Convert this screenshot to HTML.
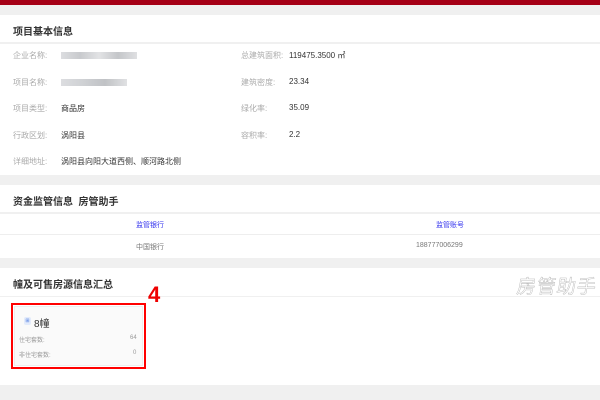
<!DOCTYPE html>
<html><head><meta charset="utf-8"><style>
*{margin:0;padding:0;box-sizing:border-box}
body{width:600px;height:400px;background:#f0f0f0;font-family:"Liberation Sans","Noto Sans CJK SC",sans-serif;position:relative;overflow:hidden;font-size:8px;color:#333}
.a{position:absolute}
.card{position:absolute;left:0;width:600px;background:#fff}
.t{position:absolute;left:13px;font-size:10px;font-weight:bold;color:#333}
.hr{position:absolute;left:0;width:600px;height:2px;background:#f0f0f0}
.lb{color:#aaa}
.bl{background:#d4d6da;height:7px}
</style></head><body>
<div class="a" style="left:0;top:0;width:600px;height:5px;background:#a50016"></div>
<div class="card" style="top:15px;height:160px">
<div class="t" style="top:8px">项目基本信息</div>
<div class="hr" style="top:27px"></div>
<div class="a lb" style="left:13px;top:35px">企业名称:</div>
<div class="a bl" style="left:61px;top:37px;width:76px;background:linear-gradient(90deg,#dcdde0,#c8cacd,#e2e3e5,#c4c6c9,#dfe0e2)"></div>
<div class="a lb" style="left:13px;top:62px">项目名称:</div>
<div class="a bl" style="left:61px;top:64px;width:66px;background:linear-gradient(90deg,#dcdde0,#cfd1d4,#c0c2c5,#e0e1e3)"></div>
<div class="a lb" style="left:13px;top:88px">项目类型:</div><div class="a" style="left:61px;top:88px">商品房</div>
<div class="a lb" style="left:13px;top:115px">行政区划:</div><div class="a" style="left:61px;top:115px">涡阳县</div>
<div class="a lb" style="left:13px;top:141px">详细地址:</div><div class="a" style="left:61px;top:141px">涡阳县向阳大道西侧、顺河路北侧</div>
<div class="a lb" style="left:241px;top:35px">总建筑面积:</div><div class="a" style="left:289px;top:35px">119475.3500 ㎡</div>
<div class="a lb" style="left:241px;top:62px">建筑密度:</div><div class="a" style="left:289px;top:62px">23.34</div>
<div class="a lb" style="left:241px;top:88px">绿化率:</div><div class="a" style="left:289px;top:88px">35.09</div>
<div class="a lb" style="left:241px;top:115px">容积率:</div><div class="a" style="left:289px;top:115px">2.2</div>
</div>
<div class="card" style="top:185px;height:73px">
<div class="t" style="top:8px">资金监管信息&nbsp; 房管助手</div>
<div class="hr" style="top:27px"></div>
<div class="a" style="left:136px;top:35px;color:#3333ee;font-size:7px">监管银行</div>
<div class="a" style="left:436px;top:35px;color:#3333ee;font-size:7px">监管账号</div>
<div class="a" style="left:0;top:49px;width:600px;height:1px;background:#eee"></div>
<div class="a" style="left:136px;top:57px;color:#777;font-size:7px">中国银行</div>
<div class="a" style="left:416px;top:57px;color:#777;font-size:7px">188777006299</div>
</div>
<div class="card" style="top:268px;height:117px">
<div class="t" style="top:8px">幢及可售房源信息汇总</div>
<div class="hr" style="top:28px;height:1px"></div>
<div class="a" style="left:517px;top:4px;font-size:19px;font-weight:normal;transform:skewX(-8deg);color:#fff;-webkit-text-stroke:0.4px #b0b0b0;letter-spacing:1px">房管助手</div>
<div class="a" style="left:148px;top:14px;font-size:22px;font-weight:bold;color:#e00">4</div>
<div class="a" style="left:11px;top:35px;width:135px;height:66px;border:2px solid #f00"></div>
<div class="a" style="left:14px;top:38px;width:129px;height:60px;background:#fafafa;border:1px solid #eee"></div>
<div class="a" style="left:24px;top:49px;width:7px;height:8px;background:#e3ebfb;border-radius:2px;font-size:5px;color:#4a7ae0;text-align:center;line-height:8px">⊞</div>
<div class="a" style="left:34px;top:47px;font-size:10px;color:#333">8幢</div>
<div class="a" style="left:19px;top:67px;font-size:6px;color:#999">住宅套数:</div>
<div class="a" style="left:130px;top:67px;font-size:6px;color:#999">64</div>
<div class="a" style="left:19px;top:82px;font-size:6px;color:#999">非住宅套数:</div>
<div class="a" style="left:133px;top:82px;font-size:6px;color:#999">0</div>
</div>
</body></html>
